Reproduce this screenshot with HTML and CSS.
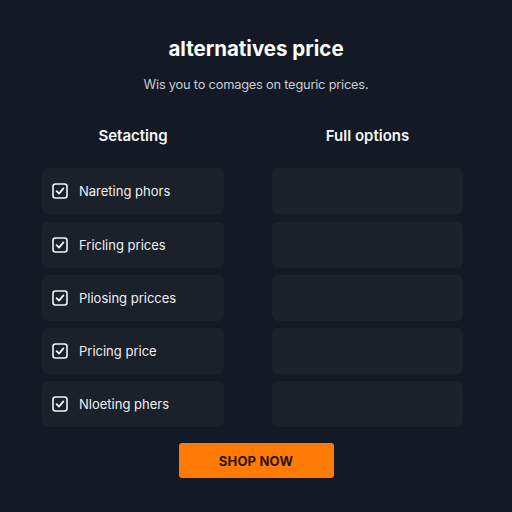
FILE: index.html
```html
<!DOCTYPE html>
<html>
<head>
<meta charset="utf-8">
<link rel="stylesheet" href="styles.css">
</head>
<body>
<main class="page">
  <h1 class="title">alternatives price</h1>
  <p class="subtitle">Wis you to comages on teguric prices.</p>
  <div class="columns">
    <div class="col col-left">
      <h2 class="col-head">Setacting</h2>
      <div class="item"><span class="check"><svg viewBox="0 0 16 16" width="16" height="16"><rect x="1" y="1" width="14" height="14" rx="2.5" fill="none" stroke="#f2f4f7" stroke-width="1.6"/><path d="M4.6 8.2 L7 10.6 L11.4 5.4" fill="none" stroke="#f2f4f7" stroke-width="1.8" stroke-linecap="round" stroke-linejoin="round"/></svg></span><span class="label">Nareting phors</span></div>
      <div class="item"><span class="check"><svg viewBox="0 0 16 16" width="16" height="16"><rect x="1" y="1" width="14" height="14" rx="2.5" fill="none" stroke="#f2f4f7" stroke-width="1.6"/><path d="M4.6 8.2 L7 10.6 L11.4 5.4" fill="none" stroke="#f2f4f7" stroke-width="1.8" stroke-linecap="round" stroke-linejoin="round"/></svg></span><span class="label">Fricling prices</span></div>
      <div class="item"><span class="check"><svg viewBox="0 0 16 16" width="16" height="16"><rect x="1" y="1" width="14" height="14" rx="2.5" fill="none" stroke="#f2f4f7" stroke-width="1.6"/><path d="M4.6 8.2 L7 10.6 L11.4 5.4" fill="none" stroke="#f2f4f7" stroke-width="1.8" stroke-linecap="round" stroke-linejoin="round"/></svg></span><span class="label">Pliosing pricces</span></div>
      <div class="item"><span class="check"><svg viewBox="0 0 16 16" width="16" height="16"><rect x="1" y="1" width="14" height="14" rx="2.5" fill="none" stroke="#f2f4f7" stroke-width="1.6"/><path d="M4.6 8.2 L7 10.6 L11.4 5.4" fill="none" stroke="#f2f4f7" stroke-width="1.8" stroke-linecap="round" stroke-linejoin="round"/></svg></span><span class="label">Pricing price</span></div>
      <div class="item"><span class="check"><svg viewBox="0 0 16 16" width="16" height="16"><rect x="1" y="1" width="14" height="14" rx="2.5" fill="none" stroke="#f2f4f7" stroke-width="1.6"/><path d="M4.6 8.2 L7 10.6 L11.4 5.4" fill="none" stroke="#f2f4f7" stroke-width="1.8" stroke-linecap="round" stroke-linejoin="round"/></svg></span><span class="label">Nloeting phers</span></div>
    </div>
    <div class="col col-right">
      <h2 class="col-head">Full options</h2>
      <div class="item empty"></div>
      <div class="item empty"></div>
      <div class="item empty"></div>
      <div class="item empty"></div>
      <div class="item empty"></div>
    </div>
  </div>
  <div class="actions"><button class="shop">SHOP NOW</button></div>
</main>
</body>
</html>
```
FILE: styles.css
```css
html, body {
  margin: 0;
  padding: 0;
  background: #141a25;
  width: 512px;
  height: 512px;
  overflow: hidden;
}
body {
  font-family: Inter, "Noto Sans", "Liberation Sans", sans-serif;
  color: #f2f4f7;
}
.page {
  padding-top: 37px;
  display: flex;
  flex-direction: column;
  align-items: center;
}
.title {
  margin: 0;
  font-size: 20.5px;
  line-height: 24px;
  font-weight: 700;
  letter-spacing: 0;
  color: #ffffff;
}
.subtitle {
  margin: 15px 0 0;
  font-size: 12.8px;
  line-height: 18px;
  letter-spacing: -0.2px;
  color: #c7ccd4;
}
.columns {
  margin-top: 32px;
  display: grid;
  grid-template-columns: 182px 191px;
  column-gap: 48px;
  width: 421px;
  align-self: flex-start;
  margin-left: 42px;
}
.col {
  display: flex;
  flex-direction: column;
  gap: 7.3px;
}
.col-head {
  margin: 0 0 15px;
  text-align: center;
  font-size: 15px;
  line-height: 20px;
  font-weight: 600;
  color: #f5f6f8;
}
.item {
  height: 46px;
  background: #1b212b;
  border-radius: 6px;
  display: flex;
  align-items: center;
  padding-left: 10px;
  box-sizing: border-box;
}
.col-right .item {
  background: #1c222c;
}
.check {
  display: flex;
  width: 16px;
  height: 16px;
}
.label {
  margin-left: 11px;
  font-size: 13px;
  color: #eef0f3;
}
.actions {
  margin-top: 16px;
  display: flex;
  justify-content: center;
  width: 100%;
}
.shop {
  width: 155px;
  height: 35px;
  border: none;
  border-radius: 3px;
  background: #ff7b06;
  color: #2a1306;
  font-family: Inter, "Noto Sans", "Liberation Sans", sans-serif;
  font-size: 13px;
  font-weight: 700;
  letter-spacing: 0.2px;
}
```
